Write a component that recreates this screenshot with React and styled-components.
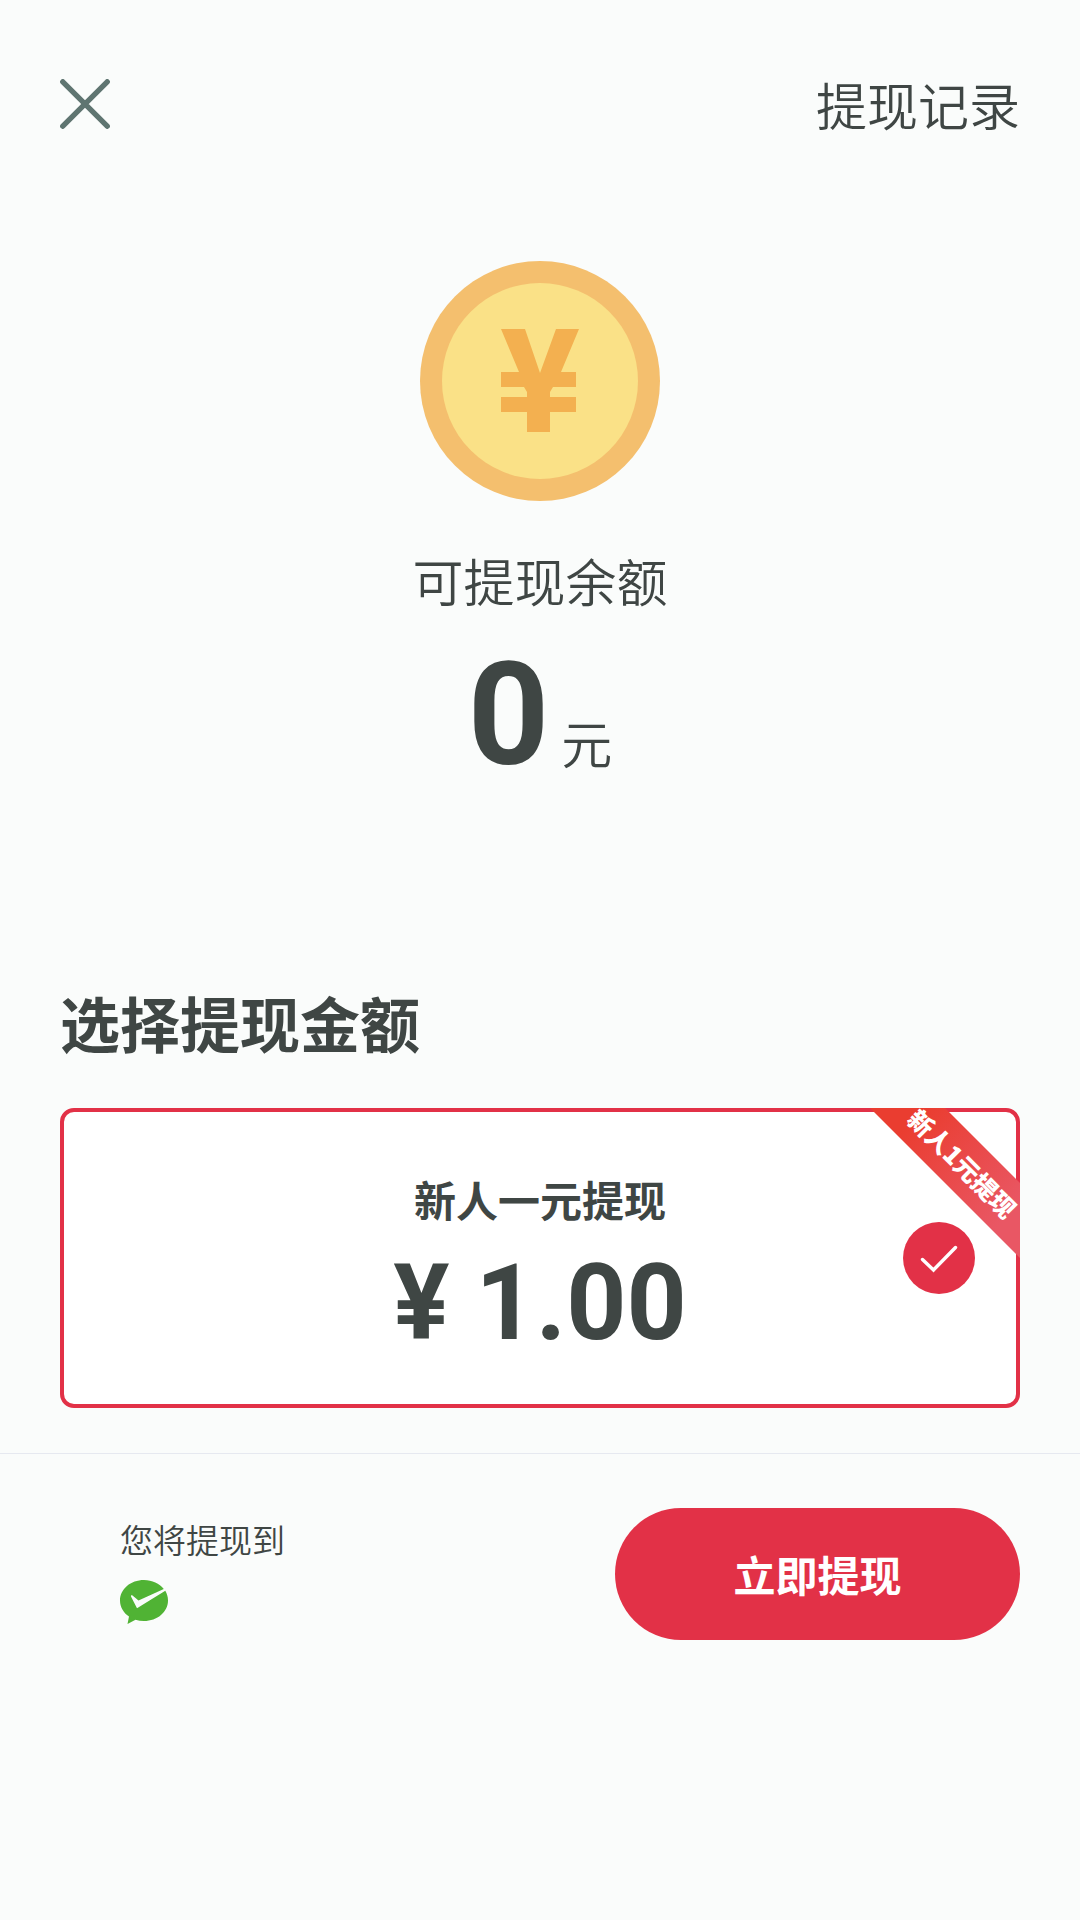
import React, { useState } from "react";
import styled, { createGlobalStyle } from "styled-components";

const GlobalStyle = createGlobalStyle`
	* {
		box-sizing: border-box;
	}

	body {
		margin: 0;
		background-color: #fafcfb;
		color: #3f4644;
		font-family: "Noto Sans CJK SC", "Noto Sans", sans-serif;
	}
`;

const Page = styled.div`
	width: 100%;
	display: flex;
	flex-direction: column;
`;

const Header = styled.header`
	display: flex;
	justify-content: space-between;
	align-items: center;
	padding: 74px 60px 0;
`;

const CloseButton = styled.button`
	display: flex;
	padding: 0;
	border: none;
	background: none;
	cursor: pointer;
`;

const RecordLink = styled.a`
	color: inherit;
	font-size: 51px;
	font-weight: 350;
	line-height: 60px;
	text-decoration: none;
`;

const Balance = styled.section`
	display: flex;
	flex-direction: column;
	align-items: center;
	padding-top: 127px;
`;

const BalanceLabel = styled.p`
	margin: 49px 0 34px;
	font-size: 51px;
	font-weight: 350;
	line-height: 60px;
`;

const BalanceAmount = styled.div`
	display: flex;
	align-items: baseline;
	gap: 12px;
`;

const Digits = styled.span`
	font-family: Roboto, sans-serif;
	font-size: ${(props) => (props.$large ? "142px" : "105px")};
	font-weight: 700;
	line-height: ${(props) => (props.$large ? "144px" : "120px")};
`;

const Unit = styled.span`
	font-size: 51px;
	font-weight: 350;
	line-height: 60px;
`;

const Options = styled.section`
	padding: 198px 60px 45px;
`;

const OptionsTitle = styled.h2`
	margin: 0 0 50px;
	font-size: 60px;
	font-weight: 700;
	line-height: 72px;
`;

const OptionCard = styled.label`
	position: relative;
	display: flex;
	flex-direction: column;
	align-items: center;
	gap: 15px;
	padding: 57px 40px 40px;
	border: 4px solid ${(props) => (props.$checked ? "#e23147" : "#e5e8ec")};
	border-radius: 14px;
	background-color: #fff;
	cursor: pointer;
`;

const OptionRadio = styled.input`
	position: absolute;
	top: 110px;
	right: 41px;
	width: 72px;
	height: 72px;
	margin: 0;
	opacity: 0;
`;

const OptionName = styled.span`
	font-size: 42px;
	font-weight: 700;
	line-height: 60px;
`;

const OptionCheck = styled.svg`
	position: absolute;
	top: 110px;
	right: 41px;
`;

/* sits over the card border, so it starts at the outer edge */
const Corner = styled.span`
	position: absolute;
	top: -4px;
	right: -4px;
	width: 150px;
	height: 150px;
	overflow: hidden;
`;

const Ribbon = styled.span`
	position: absolute;
	top: 30px;
	left: -18px;
	width: 224px;
	padding-right: 4px;
	background: linear-gradient(90deg, #ea3d30 20%, #e95764 80%);
	color: #fff;
	font-size: 25px;
	font-weight: 900;
	line-height: 53px;
	text-align: center;
	white-space: nowrap;
	transform: rotate(45deg);
`;

const Footer = styled.footer`
	display: flex;
	justify-content: space-between;
	align-items: flex-start;
	padding: 54px 60px 60px 120px;
	border-top: 1px solid #e6e9f0;
`;

const Target = styled.div`
	display: flex;
	flex-direction: column;
	gap: 17px;
	padding-top: 7px;
	font-size: 33px;
	font-weight: 350;
	line-height: 48px;
`;

const SubmitButton = styled.button`
	min-width: 405px;
	padding: 36px 60px;
	border: none;
	border-radius: 66px;
	background-color: #e23147;
	color: #fff;
	font-family: inherit;
	font-size: 42px;
	font-weight: 700;
	line-height: 60px;
	cursor: pointer;
`;

function CloseIcon() {
	return (
		<svg width="50" height="50" viewBox="0 0 50 50" aria-hidden="true">
			<path
				d="M2.800 2.800 47.200 47.200M47.200 2.800 2.800 47.200"
				stroke="#5f7571"
				strokeWidth="5.400"
				strokeLinecap="round"
			/>
		</svg>
	);
}

function CoinIcon() {
	return (
		<svg width="240" height="240" viewBox="0 0 240 240" aria-hidden="true">
			<circle cx="120" cy="120" r="120" fill="#f4bf6e" />
			<circle cx="120" cy="120" r="98" fill="#fae187" />
			<path
				d="M81 68h24l15 44 16-44h23l-18 43h15v15h-23l-3 5v5h26v15h-26v20h-23v-20H81v-15h26v-5l-3-5H81v-15h18z"
				fill="#f3b050"
			/>
		</svg>
	);
}

function WechatPayIcon() {
	return (
		<svg width="48" height="44" viewBox="0 0 48 44" aria-hidden="true">
			<path
				d="M24 0C10.7 0 0 9 0 20.500c0 6.500 3.500 12.300 9 16.100L7.500 44l8-4.200c2.700.8 5.500 1.200 8.500 1.200 13.300 0 24-9 24-20.500 0-3.500-1-6.800-2.700-9.700L17 28.200 11 16.500c-.3-1.200.6-1.700 1.500-1l6 5L43.800 8.900C39.400 3.500 32.200 0 24 0z"
				fill="#50b334"
			/>
		</svg>
	);
}

const amounts = [
	{ id: "newcomer", name: "新人一元提现", price: "¥ 1.00", tag: "新人1元提现" },
];

function App() {
	const [selected, setSelected] = useState("newcomer");

	return (
		<Page>
			<GlobalStyle />
			<Header>
				<CloseButton type="button" aria-label="关闭">
					<CloseIcon />
				</CloseButton>
				<RecordLink href="#records">提现记录</RecordLink>
			</Header>

			<Balance>
				<CoinIcon />
				<BalanceLabel>可提现余额</BalanceLabel>
				<BalanceAmount>
					<Digits $large>0</Digits>
					<Unit>元</Unit>
				</BalanceAmount>
			</Balance>

			<Options>
				<OptionsTitle>选择提现金额</OptionsTitle>
				{amounts.map((item) => (
					<OptionCard key={item.id} $checked={selected === item.id}>
						<OptionName>{item.name}</OptionName>
						<Digits>{item.price}</Digits>
						<Corner>
							<Ribbon>{item.tag}</Ribbon>
						</Corner>
						{selected === item.id && (
							<OptionCheck width="72" height="72" viewBox="0 0 72 72" aria-hidden="true">
								<circle cx="36" cy="36" r="36" fill="#e23147" />
								<path
									d="M19.500 37.500 30.500 48 52.500 25.500"
									fill="none"
									stroke="#fff"
									strokeWidth="3.400"
									strokeLinecap="round"
								/>
							</OptionCheck>
						)}
						<OptionRadio
							type="radio"
							name="amount"
							value={item.id}
							checked={selected === item.id}
							onChange={(e) => setSelected(e.target.value)}
						/>
					</OptionCard>
				))}
			</Options>

			<Footer>
				<Target>
					<span>您将提现到</span>
					<WechatPayIcon />
				</Target>
				<SubmitButton type="button">立即提现</SubmitButton>
			</Footer>
		</Page>
	);
}

export default App;
